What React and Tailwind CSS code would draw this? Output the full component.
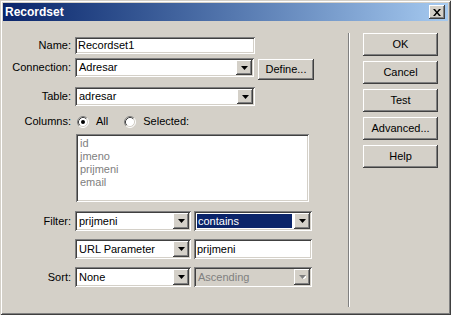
import React from "react";

const sunken =
  "shadow-[inset_1px_1px_#808080,inset_-1px_-1px_#ffffff,inset_2px_2px_#404040,inset_-2px_-2px_#d4d0c8]";
const raised =
  "shadow-[inset_-1px_-1px_#404040,inset_1px_1px_#ffffff,inset_-2px_-2px_#808080,inset_2px_2px_#d4d0c8]";

function Arrow({ disabled }) {
  return (
    <svg width="7" height="4" viewBox="0 0 7 4">
      {disabled && <path d="M1 1h7L4.5 5z" fill="#ffffff" />}
      <path d="M0 0h7L3.5 4z" fill={disabled ? "#808080" : "#000000"} />
    </svg>
  );
}

function Combo({ className, text, highlight, disabled }) {
  return (
    <div
      className={`${className} ${sunken} ${
        disabled ? "bg-[#d4d0c8]" : "bg-white"
      } p-[2px] flex`}
    >
      <div className="flex-1 flex p-[1px] pr-[2px]">
        <div
          className={`flex-1 flex items-center pl-[1px] leading-none ${
            highlight ? "bg-[#0a246a] text-white" : ""
          } ${disabled ? "text-[#808080]" : ""}`}
        >
          {text}
        </div>
      </div>
      <div
        className={`w-[16px] bg-[#d4d0c8] ${raised} flex items-center justify-center`}
      >
        <Arrow disabled={disabled} />
      </div>
    </div>
  );
}

function TextBox({ className, text }) {
  return (
    <div
      className={`${className} ${sunken} bg-white flex items-center pl-[3px] leading-none`}
    >
      {text}
    </div>
  );
}

function Radio({ checked }) {
  return (
    <svg width="12" height="12" viewBox="0 0 12 12">
      <circle cx="6" cy="6" r="5" fill="#ffffff" />
      <path d="M2.11 9.89A5.5 5.5 0 0 1 9.89 2.11" fill="none" stroke="#808080" />
      <path d="M9.89 2.11A5.5 5.5 0 0 1 2.11 9.89" fill="none" stroke="#ffffff" />
      <path d="M2.82 9.18A4.5 4.5 0 0 1 9.18 2.82" fill="none" stroke="#404040" />
      <path d="M9.18 2.82A4.5 4.5 0 0 1 2.82 9.18" fill="none" stroke="#d4d0c8" />
      {checked && <circle cx="6" cy="6" r="2" fill="#000000" />}
    </svg>
  );
}

function Btn({ children }) {
  return (
    <div
      className={`w-[75px] h-[23px] bg-[#d4d0c8] ${raised} flex items-center justify-center leading-none`}
    >
      {children}
    </div>
  );
}

function Label({ children }) {
  return (
    <div className="w-[68px] shrink-0 text-right leading-none mr-[4px]">
      {children}
    </div>
  );
}

export default function App() {
  return (
    <div
      className={`w-[451px] h-[315px] bg-[#d4d0c8] p-[3px] flex flex-col shadow-[inset_1px_1px_#d4d0c8,inset_-1px_-1px_#404040,inset_2px_2px_#ffffff,inset_-2px_-2px_#808080] font-['Liberation_Sans',Arial,sans-serif] text-[11px] text-black`}
    >
      <div className="h-[18px] shrink-0 flex items-center justify-between pl-[2px] pr-[3px] bg-linear-to-r from-[#0a246a] to-[#a6caf0]">
        <span className="text-white font-bold text-[12px] leading-none">
          Recordset
        </span>
        <div
          className={`w-[16px] h-[14px] bg-[#d4d0c8] ${raised} flex items-center justify-center`}
        >
          <svg width="8" height="7" viewBox="0 0 8 7">
            <path
              d="M0 0h2l2 2.5L6 0h2L5 3.5 8 7H6L4 4.5 2 7H0l3-3.5z"
              fill="#000000"
            />
          </svg>
        </div>
      </div>

      <div className="flex-1 flex items-stretch">
        <div className="w-[345px] shrink-0 flex flex-col">
          <div className="mt-[16px] h-[17px] flex items-center">
            <Label>Name:</Label>
            <TextBox className="w-[180px] h-[17px]" text="Recordset1" />
          </div>

          <div className="mt-[4px] h-[22px] flex items-start">
            <div className="h-[19px] flex items-center">
              <Label>Connection:</Label>
            </div>
            <Combo className="w-[179px] h-[19px]" text="Adresar" />
            <div
              className={`ml-[4px] mt-[1px] w-[56px] h-[21px] bg-[#d4d0c8] ${raised} flex items-center justify-center leading-none`}
            >
              Define...
            </div>
          </div>

          <div className="mt-[7px] h-[19px] flex items-center">
            <Label>Table:</Label>
            <Combo className="w-[180px] h-[19px]" text="adresar" />
          </div>

          <div className="mt-[9px] h-[13px] flex items-center">
            <Label>Columns:</Label>
            <div className="ml-[2px] flex items-center">
              <Radio checked />
            </div>
            <span className="ml-[7px] leading-none">All</span>
            <div className="ml-[16px] flex items-center">
              <Radio />
            </div>
            <span className="ml-[7px] leading-none">Selected:</span>
          </div>

          <div
            className={`mt-[6px] ml-[73px] w-[233px] h-[68px] bg-white ${sunken} pl-[4px] pt-[3px] text-[#808080] leading-[13px]`}
          >
            <div>id</div>
            <div>jmeno</div>
            <div>prijmeni</div>
            <div>email</div>
          </div>

          <div className="mt-[9px] h-[20px] flex items-center">
            <Label>Filter:</Label>
            <Combo className="w-[116px] h-[20px]" text="prijmeni" />
            <Combo
              className="ml-[3px] w-[118px] h-[20px]"
              text="contains"
              highlight
            />
          </div>

          <div className="mt-[8px] h-[20px] flex items-center">
            <Label></Label>
            <Combo className="w-[116px] h-[20px]" text="URL Parameter" />
            <TextBox className="ml-[3px] w-[118px] h-[20px]" text="prijmeni" />
          </div>

          <div className="mt-[8px] h-[20px] flex items-center">
            <Label>Sort:</Label>
            <Combo className="w-[116px] h-[20px]" text="None" />
            <Combo
              className="ml-[3px] w-[118px] h-[20px]"
              text="Ascending"
              disabled
            />
          </div>
        </div>

        <div className="w-[2px] mt-[12px] mb-[5px] border-l border-l-[#808080] border-r border-r-white" />

        <div className="pl-[13px] pt-[12px] flex flex-col gap-[5px]">
          <Btn>OK</Btn>
          <Btn>Cancel</Btn>
          <Btn>Test</Btn>
          <Btn>Advanced...</Btn>
          <Btn>Help</Btn>
        </div>
      </div>
    </div>
  );
}
